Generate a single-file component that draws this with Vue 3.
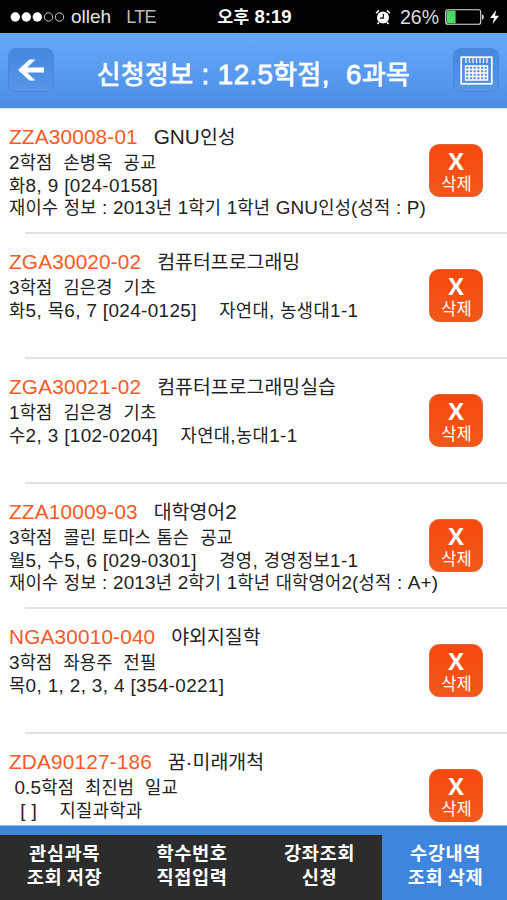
<script setup>
import { ref } from 'vue';

const courses = ref([
  { code: 'ZZA30008-01', name: 'GNU인성', info: '2학점  손병욱  공교', time: '화8, 9 [024-0158]', retake: '재이수 정보 : 2013년 1학기 1학년 GNU인성(성적 : P)' },
  { code: 'ZGA30020-02', name: '컴퓨터프로그래밍', info: '3학점  김은경  기초', time: '화5, 목6, 7 [024-0125]    자연대, 농생대1-1' },
  { code: 'ZGA30021-02', name: '컴퓨터프로그래밍실습', info: '1학점  김은경  기초', time: '수2, 3 [102-0204]    자연대,농대1-1' },
  { code: 'ZZA10009-03', name: '대학영어2', info: '3학점  콜린 토마스 톰슨  공교', time: '월5, 수5, 6 [029-0301]    경영, 경영정보1-1', retake: '재이수 정보 : 2013년 2학기 1학년 대학영어2(성적 : A+)' },
  { code: 'NGA30010-040', name: '야외지질학', info: '3학점  좌용주  전필', time: '목0, 1, 2, 3, 4 [354-0221]' },
  { code: 'ZDA90127-186', name: '꿈·미래개척', info: ' 0.5학점  최진범  일교', time: '  [ ]    지질과학과' }
]);

const tabs = [
  ['관심과목', '조회 저장'],
  ['학수번호', '직접입력'],
  ['강좌조회', '신청'],
  ['수강내역', '조회 삭제']
];
const activeTab = ref(3);

const title = '신청정보 : 12.5학점,  6과목';

// Hangul is set slightly smaller than the latin text around it
function runs(text) {
  return text.split(/([가-힣]+)/).filter(Boolean).map(t => ({ t, ko: /[가-힣]/.test(t) }));
}

function removeCourse(index) {
  courses.value.splice(index, 1);
}
</script>

<template>
  <div class="screen">
    <div class="status">
      <div class="status-left">
        <svg class="signal" width="55" height="12" viewBox="0 0 55 12">
          <circle cx="5.3" cy="6" r="4.7" fill="#fff" />
          <circle cx="16.3" cy="6" r="4.7" fill="#fff" />
          <circle cx="27.3" cy="6" r="4.7" fill="#fff" />
          <circle cx="38.5" cy="6" r="4.2" fill="none" stroke="#ccc" />
          <circle cx="49.5" cy="6" r="4.2" fill="none" stroke="#ccc" />
        </svg>
        <span class="carrier">olleh</span>
        <span class="network">LTE</span>
      </div>
      <div class="clock"><span class="ko">오후</span> 8:19</div>
      <div class="status-right">
        <svg width="16" height="16" viewBox="0 0 16 16">
          <circle cx="8" cy="8.6" r="6" fill="#fff" />
          <path d="M1 4.2 4 1.4M15 4.2 12 1.4M3.8 13.2 2.6 15M12.2 13.2 13.4 15" stroke="#fff" stroke-width="1.5" />
          <path d="M8.3 4.8v4.3H5" fill="none" stroke="#000" stroke-width="1.1" />
        </svg>
        <span class="percent">26%</span>
        <svg class="battery" width="40" height="16" viewBox="0 0 40 16">
          <rect x="0.7" y="0.7" width="35" height="14.6" rx="2" fill="none" stroke="#ddd" stroke-width="1.1" />
          <rect x="1.6" y="1.6" width="9" height="12.8" fill="#4cd964" />
          <path d="M37 5.2c2.4.8 2.4 4.8 0 5.6z" fill="#ddd" />
        </svg>
        <svg class="bolt" width="9" height="14" viewBox="0 0 9 14">
          <path d="M6.2 0 0 8h4L2.6 14 9 5.8H5z" fill="#fff" />
        </svg>
      </div>
    </div>

    <header class="header">
      <button class="nav-btn">
        <svg width="28" height="24" viewBox="0 0 28 24">
          <path d="M1 12 12.4 1.4H18.4L10.2 9.6H27v4.8H10.2L18.4 22.6h-6z" fill="#fff" />
        </svg>
      </button>
      <h1><span v-for="(r, i) in runs(title)" :key="i" :class="{ ko: r.ko }">{{ r.t }}</span></h1>
      <button class="nav-btn">
        <svg width="33" height="29" viewBox="0 0 33 29">
          <rect x="1.2" y="1.2" width="30.6" height="26.6" fill="none" stroke="#fff" stroke-width="1.7" />
          <path d="M6 1v6M9.5 1v6M13 1v6M16.5 1v6M20 1v6M23.5 1v6M27 1v6" stroke="#fff" stroke-width="1.2" />
          <path d="M5.5 10h22v14h-22zM5.5 13.5h22M5.5 17h22M5.5 20.5h22M9.2 10v14M12.9 10v14M16.5 10v14M20.2 10v14M23.9 10v14" fill="none" stroke="#fff" stroke-width="1.4" />
        </svg>
      </button>
    </header>

    <main class="list">
      <div v-for="(course, index) in courses" :key="course.code" class="course">
        <div class="course-text">
          <p class="name"><span class="code">{{ course.code }}</span><span class="gap">{{ '   ' }}</span><span v-for="(r, i) in runs(course.name)" :key="i" :class="{ ko: r.ko }">{{ r.t }}</span></p>
          <p class="info"><span v-for="(r, i) in runs(course.info)" :key="i" :class="{ ko: r.ko }">{{ r.t }}</span></p>
          <p class="time"><span v-for="(r, i) in runs(course.time)" :key="i" :class="{ ko: r.ko }">{{ r.t }}</span></p>
          <p v-if="course.retake" class="retake"><span v-for="(r, i) in runs(course.retake)" :key="i" :class="{ ko: r.ko }">{{ r.t }}</span></p>
        </div>
        <button class="delete" @click="removeCourse(index)">
          <span class="x">X</span>
          <span class="label">삭제</span>
        </button>
      </div>
    </main>

    <nav class="tabs">
      <button v-for="(tab, i) in tabs" :key="i" class="tab" :class="{ active: activeTab === i }" @click="activeTab = i">
        <span>{{ tab[0] }}</span>
        <span>{{ tab[1] }}</span>
      </button>
    </nav>
  </div>
</template>

<style>
body {
  background: #fff;
}
</style>

<style scoped>
.screen {
  width: 507px;
  height: 900px;
  display: flex;
  flex-direction: column;
  overflow: hidden;
  background: #fff;
  font-family: "Liberation Sans", "Noto Sans CJK KR", sans-serif;
}
button {
  border: none;
  padding: 0;
  font-family: inherit;
  cursor: pointer;
}
.ko {
  font-family: "Noto Sans CJK KR", sans-serif;
  font-size: 0.935em;
  line-height: 1;
}
.status {
  flex: none;
  height: 33px;
  display: grid;
  grid-template-columns: 1fr auto 1fr;
  align-items: center;
  box-sizing: border-box;
  padding: 1px 8px 0 10px;
  background: #000;
  color: #fff;
  font-size: 18.5px;
}
.status-left,
.status-right {
  display: flex;
  align-items: center;
}
.status-right {
  justify-content: flex-end;
}
.carrier {
  margin-left: 6px;
  color: #e6e6e6;
  font-size: 19px;
}
.network {
  margin-left: 15px;
  color: #bbb;
  font-size: 18px;
  letter-spacing: -0.7px;
}
.clock {
  font-weight: bold;
  font-size: 18.6px;
}
.percent {
  margin: 0 6px 0 9px;
  color: #ddd;
  font-size: 19.5px;
}
.bolt {
  margin-left: 5px;
}
.header {
  flex: none;
  height: 76px;
  box-sizing: border-box;
  display: flex;
  align-items: center;
  justify-content: space-between;
  padding: 0 8px 1px;
  background: linear-gradient(#66a8f8, #4c8ee7);
  border-bottom: 1px solid #d5eefc;
}
.nav-btn {
  width: 46px;
  height: 44px;
  box-sizing: border-box;
  display: flex;
  align-items: center;
  justify-content: center;
  border: 1px solid #4789df;
  border-radius: 8px;
  background: linear-gradient(#4387df, #5796e8);
}
.header h1 {
  margin: 9px 0 0;
  color: #fff;
  font-size: 27.6px;
  font-weight: normal;
  line-height: 36px;
  letter-spacing: 0.45px;
  white-space: pre;
  -webkit-text-stroke: 0.8px #fff;
}
.list {
  flex: 1;
  min-height: 0;
  overflow: hidden;
}
.course {
  height: 125px;
  box-sizing: border-box;
  display: flex;
  align-items: flex-start;
  justify-content: space-between;
  padding: 15px 24px 0 9px;
  background: linear-gradient(#e2e2e2, #e2e2e2) 25px 100% / 100% 2px no-repeat;
}
.course-text {
  width: 0;
  flex: 1;
  color: #222;
  font-size: 18.9px;
}
.course-text p {
  margin: 0;
  height: 23px;
  line-height: 23px;
  white-space: pre;
}
.course-text .name {
  height: 25px;
  line-height: 25px;
  font-size: 20.8px;
}
.course-text .info {
  height: 24px;
  line-height: 27px;
  letter-spacing: 0.18px;
}
.course-text .time {
  line-height: 26px;
  letter-spacing: 0.36px;
}
.course-text .retake {
  line-height: 24px;
  letter-spacing: 0.19px;
}
.code {
  color: #f85a28;
  letter-spacing: 0.15px;
}
.gap {
  letter-spacing: -0.5px;
}
.delete {
  flex: none;
  width: 54px;
  height: 53px;
  margin-top: 20px;
  box-sizing: border-box;
  display: flex;
  flex-direction: column;
  align-items: center;
  border: 1px solid #dd6634;
  border-radius: 10px;
  background: linear-gradient(#f8480e, #f0591a);
  color: #fff;
}
.x {
  margin-top: 4px;
  font-family: "Open Sans", sans-serif;
  font-size: 23.5px;
  font-weight: bold;
  line-height: 25px;
}
.label {
  margin-left: 1px;
  font-family: "Noto Sans CJK KR", sans-serif;
  font-size: 16.5px;
  line-height: 18px;
}
.tabs {
  flex: none;
  height: 75px;
  display: grid;
  grid-template-columns: 127px 128px 127px 125px;
  box-sizing: border-box;
  border-top: 1px solid #8dbcf0;
  background: #3d85dd;
}
.tab {
  display: flex;
  flex-direction: column;
  align-items: center;
  box-sizing: border-box;
  margin-top: 9px;
  padding: 5px 0 0 2px;
  background: #2c2c2c;
  color: #fff;
  font-family: "Noto Sans CJK KR", sans-serif;
  font-size: 18.7px;
  font-weight: bold;
  line-height: 24px;
  letter-spacing: 0.5px;
}
.tab.active {
  background: #3d85dd;
}
</style>
